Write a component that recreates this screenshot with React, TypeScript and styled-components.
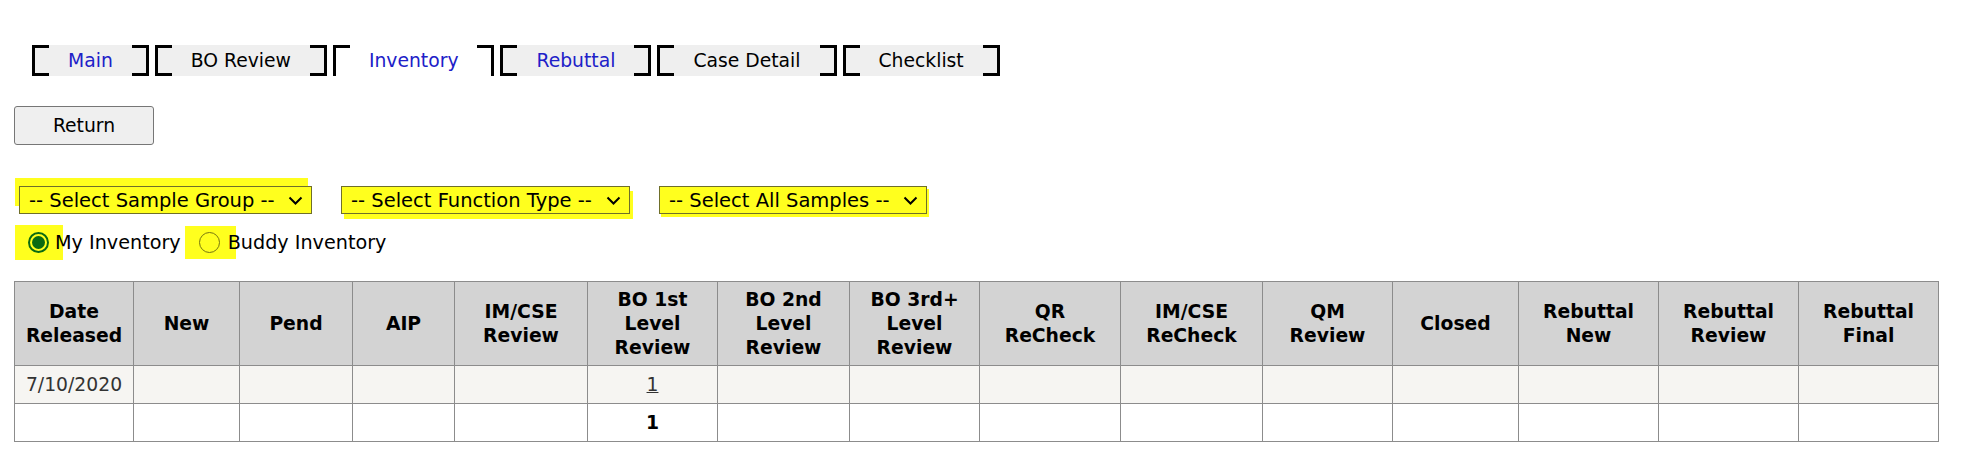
import React, { useState } from "react";
import styled, { createGlobalStyle, css } from "styled-components";

const GlobalStyle = createGlobalStyle`
  body {
    margin: 0;
    background: #fff;
    font-family: "DejaVu Sans", Verdana, sans-serif;
    font-size: 18.75px;
    color: #000;
  }
`;

const Page = styled.div`
  padding: 45px 0 0 14px;
`;

// tab strip: bracket corners drawn by the pseudo elements
const TabBar = styled.nav`
  display: flex;
  gap: 6px;
  margin-left: 18px;
  height: 31px;
`;

const Tab = styled.div<{ $active?: boolean; $link?: boolean }>`
  position: relative;
  display: flex;
  align-items: center;
  padding: 0 36px;
  background: ${(p) => (p.$active ? "#fff" : "#efefef")};
  color: ${(p) => (p.$link ? "#2020c8" : "#000")};
  cursor: pointer;
  white-space: nowrap;

  &::before,
  &::after {
    content: "";
    position: absolute;
    top: 0;
    bottom: 0;
    width: 14px;
    border-top: 3px solid #000;
    ${(p) =>
      p.$active
        ? css`border-bottom: none;`
        : css`border-bottom: 3px solid #000;`}
  }
  &::before {
    left: 0;
    border-left: 3px solid #000;
  }
  &::after {
    right: 0;
    border-right: 3px solid #000;
  }
`;

const ReturnButton = styled.button`
  display: block;
  margin-top: 30px;
  width: 140px;
  height: 39px;
  background: #efefef;
  border: 1px solid #767676;
  border-radius: 3px;
  font-family: inherit;
  font-size: 18.75px;
  color: #000;
  cursor: pointer;
`;

const FilterRow = styled.div`
  display: flex;
  gap: 29px;
  margin: 41px 0 0 5px;
`;

// yellow marker highlight is the background plus an offset shadow
const SelectBox = styled.div<{ $w: number; $sx: number; $sy: number }>`
  display: flex;
  align-items: center;
  justify-content: space-between;
  box-sizing: border-box;
  width: ${(p) => p.$w}px;
  height: 28px;
  padding: 0 8px 0 9px;
  border: 1px solid #6f6f2a;
  background: #ffff1e;
  box-shadow: ${(p) => p.$sx}px ${(p) => p.$sy}px 0 0 #ffff1e;
  font-size: 19.5px;
  white-space: nowrap;
  cursor: pointer;
`;

const RadioRow = styled.div`
  display: flex;
  align-items: center;
  margin-top: 11px;
  height: 34px;
  font-size: 19.2px;
`;

const RadioLabel = styled.label<{ $gap: number }>`
  display: flex;
  align-items: center;
  margin-left: ${(p) => p.$gap}px;
  cursor: pointer;
`;

const RadioMark = styled.span<{ $pad: string; $pull: number }>`
  display: flex;
  align-items: center;
  justify-content: center;
  background: #ffff1e;
  padding: ${(p) => p.$pad};
  margin-right: -${(p) => p.$pull}px;
`;

const RadioCircle = styled.span<{ $checked: boolean }>`
  display: flex;
  align-items: center;
  justify-content: center;
  box-sizing: border-box;
  width: 21px;
  height: 21px;
  border-radius: 50%;
  border: ${(p) => (p.$checked ? "2px solid #0a6a12" : "1px solid #77770f")};

  &::after {
    content: "";
    display: ${(p) => (p.$checked ? "block" : "none")};
    width: 13px;
    height: 13px;
    border-radius: 50%;
    background: #0a6a12;
  }
`;

const RadioText = styled.span`
  position: relative;
`;

const Grid = styled.table`
  margin-top: 22px;
  border-collapse: collapse;
  table-layout: fixed;
  width: 1924px;
  border: 1px solid #8c8c8c;
  font-family: "DejaVu Sans", Verdana, sans-serif;
  font-size: 18.75px;
`;

const Col = styled.col<{ $w: number }>`
  width: ${(p) => p.$w}px;
`;

const HeadCell = styled.th`
  height: 83px;
  padding: 0 4px;
  background: #d3d3d3;
  border: 1px solid #8c8c8c;
  font-size: 18.75px;
  font-weight: bold;
  line-height: 24px;
  text-align: center;
  vertical-align: middle;
  color: #000;
`;

const Row = styled.tr<{ $shade?: boolean }>`
  background: ${(p) => (p.$shade ? "#f6f5f2" : "#fff")};
`;

const Cell = styled.td<{ $bold?: boolean }>`
  height: 37px;
  padding: 0;
  border: 1px solid #8c8c8c;
  font-size: 18.75px;
  text-align: center;
  vertical-align: middle;
  color: ${(p) => (p.$bold ? "#000" : "#333")};
  font-weight: ${(p) => (p.$bold ? "bold" : "normal")};
`;

const CountLink = styled.a`
  color: #333;
  text-decoration: underline;
  cursor: pointer;
`;

function Chevron() {
  return (
    <svg width="15" height="9" viewBox="0 0 15 9">
      <path d="M1.5 1.5 L7.5 7.5 L13.5 1.5" fill="none" stroke="#000" strokeWidth="2" />
    </svg>
  );
}

const tabs = [
  { label: "Main", link: true },
  { label: "BO Review" },
  { label: "Inventory", link: true, active: true },
  { label: "Rebuttal", link: true },
  { label: "Case Detail" },
  { label: "Checklist" },
];

const selects = [
  { label: "-- Select Sample Group --", w: 293, sx: -4, sy: -8 },
  { label: "-- Select Function Type --", w: 289, sx: 3, sy: 5 },
  { label: "-- Select All Samples --", w: 268, sx: 2, sy: 3 },
];

const columns: { title: React.ReactNode; w: number }[] = [
  { title: <>Date<br />Released</>, w: 119 },
  { title: "New", w: 106 },
  { title: "Pend", w: 113 },
  { title: "AIP", w: 102 },
  { title: <>IM/CSE<br />Review</>, w: 133 },
  { title: <>BO 1st<br />Level<br />Review</>, w: 130 },
  { title: <>BO 2nd<br />Level<br />Review</>, w: 132 },
  { title: <>BO 3rd+<br />Level<br />Review</>, w: 130 },
  { title: <>QR<br />ReCheck</>, w: 141 },
  { title: <>IM/CSE<br />ReCheck</>, w: 142 },
  { title: <>QM<br />Review</>, w: 130 },
  { title: "Closed", w: 126 },
  { title: <>Rebuttal<br />New</>, w: 140 },
  { title: <>Rebuttal<br />Review</>, w: 140 },
  { title: <>Rebuttal<br />Final</>, w: 140 },
];

export default function App() {
  const [who, setWho] = useState<"mine" | "buddy">("mine");

  return (
    <>
      <GlobalStyle />
      <Page>
        <TabBar>
          {tabs.map((t) => (
            <Tab key={t.label} $active={t.active} $link={t.link}>
              {t.label}
            </Tab>
          ))}
        </TabBar>

        <ReturnButton>Return</ReturnButton>

        <FilterRow>
          {selects.map((s) => (
            <SelectBox key={s.label} $w={s.w} $sx={s.sx} $sy={s.sy}>
              <span>{s.label}</span>
              <Chevron />
            </SelectBox>
          ))}
        </FilterRow>

        <RadioRow>
          <RadioLabel $gap={1} onClick={() => setWho("mine")}>
            <RadioMark $pad="7px 14px 7px 13px" $pull={8}>
              <RadioCircle $checked={who === "mine"} />
            </RadioMark>
            <RadioText>My Inventory</RadioText>
          </RadioLabel>
          <RadioLabel $gap={4} onClick={() => setWho("buddy")}>
            <RadioMark $pad="6px 16px 6px 14px" $pull={8}>
              <RadioCircle $checked={who === "buddy"} />
            </RadioMark>
            <RadioText>Buddy Inventory</RadioText>
          </RadioLabel>
        </RadioRow>

        <Grid>
          <colgroup>
            {columns.map((c, i) => (
              <Col key={i} $w={c.w} />
            ))}
          </colgroup>
          <thead>
            <tr>
              {columns.map((c, i) => (
                <HeadCell key={i}>{c.title}</HeadCell>
              ))}
            </tr>
          </thead>
          <tbody>
            <Row $shade>
              {columns.map((_, i) => (
                <Cell key={i}>
                  {i === 0 ? "7/10/2020" : i === 5 ? <CountLink>1</CountLink> : null}
                </Cell>
              ))}
            </Row>
            <Row>
              {columns.map((_, i) => (
                <Cell key={i} $bold>
                  {i === 5 ? "1" : null}
                </Cell>
              ))}
            </Row>
          </tbody>
        </Grid>
      </Page>
    </>
  );
}
